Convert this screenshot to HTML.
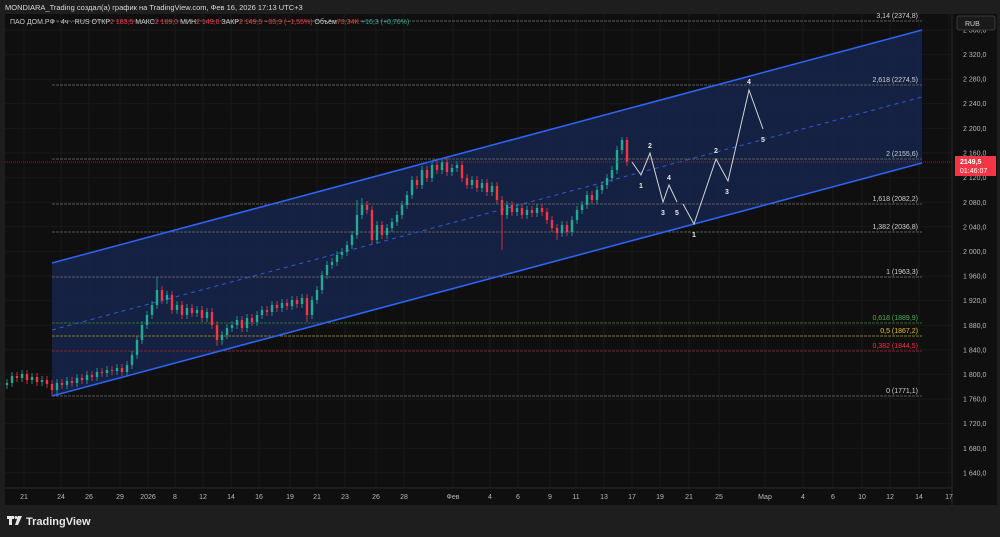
<!DOCTYPE html><html><head><meta charset="utf-8"><style>
html,body{margin:0;padding:0;background:#1e1e1e;width:1000px;height:537px;overflow:hidden;font-family:"Liberation Sans","Noto Sans CJK SC",sans-serif}
svg{position:absolute;left:0;top:0}
</style></head><body>
<svg width="1000" height="537" xmlns="http://www.w3.org/2000/svg" font-family="Liberation Sans, sans-serif">
<rect width="1000" height="537" fill="#1e1e1e"/>
<text x="5" y="10" fill="#d8d8d8" font-size="7.5">MONDIARA_Trading создал(а) график на TradingView.com, Фев 16, 2026 17:13 UTC+3</text>
<rect x="5" y="14" width="992" height="491" fill="#0f0f0f"/>
<g stroke="#181818" stroke-width="1">
<path d="M24 14V488M61 14V488M89 14V488M120 14V488M148 14V488M175 14V488M203 14V488M231 14V488M259 14V488M290 14V488M317 14V488M345 14V488M376 14V488M404 14V488M453 14V488M490 14V488M518 14V488M550 14V488M576 14V488M604 14V488M632 14V488M660 14V488M689 14V488M719 14V488M765 14V488M803 14V488M833 14V488M862 14V488M890 14V488M919 14V488M949 14V488"/>
<path d="M5 30H952M5 54.6H952M5 79.2H952M5 103.8H952M5 128.4H952M5 153H952M5 177.6H952M5 202.2H952M5 226.8H952M5 251.4H952M5 276H952M5 300.6H952M5 325.2H952M5 349.8H952M5 374.4H952M5 399H952M5 423.6H952M5 448.2H952M5 472.8H952"/>
</g>
<polygon points="52,263 922,30 922,163 52,396" fill="#162346" opacity="0.95"/>
<g stroke-width="1" stroke-dasharray="3,1">
<path d="M52 21H922M52 85H922M52 159H922M52 204H922M52 232H922M52 277H922M52 396H922" stroke="#5a5a5a"/>
<path d="M52 323H922" stroke="#2f6b33"/>
<path d="M52 336H922" stroke="#8a7720"/>
<path d="M52 351H922" stroke="#7a2530"/>
</g>
<g font-size="7" text-anchor="end" fill="#d0d0d0">
<text x="918" y="18">3,14 (2374,8)</text>
<text x="918" y="82">2,618 (2274,5)</text>
<text x="918" y="156">2 (2155,6)</text>
<text x="918" y="201">1,618 (2082,2)</text>
<text x="918" y="229">1,382 (2036,8)</text>
<text x="918" y="274">1 (1963,3)</text>
<text x="918" y="320" fill="#4caf50">0,618 (1889,9)</text>
<text x="918" y="333" fill="#e6c229">0,5 (1867,2)</text>
<text x="918" y="348" fill="#f23645">0,382 (1844,5)</text>
<text x="918" y="393">0 (1771,1)</text>
</g>
<line x1="52" y1="330" x2="922" y2="97" stroke="#2f5ad8" stroke-width="1" stroke-dasharray="4,4"/>
<g fill="none">
<path stroke="#22ab94" stroke-width="2.4" d="M7 385V383M12 383V376M22 378V374M32 380V377M42 382V380M57 390V383M67 385V381M77 383V378M87 380V375M97 377V372M107 373V370M117 371V368M127 372V365M132 365V355M137 355V340M142 340V325M147 325V315M152 315V305M157 305V290M167 300V295M177 310V305M187 315V308M197 313V310M207 318V312M222 340V335M227 335V328M232 328V325M237 325V320M247 328V318M257 322V315M262 315V310M272 312V305M282 308V303M292 306V300M302 304V298M312 315V300M317 300V290M322 290V275M327 275V265M332 265V262M337 262V255M342 255V252M347 252V245M352 245V235M357 235V215M362 215V205M377 240V225M387 235V228M392 228V222M397 222V215M402 215V205M407 205V195M412 195V180M422 185V170M432 178V165M442 170V162M452 172V168M457 168V165M472 185V180M482 188V183M492 192V186M507 215V205M517 212V208M527 215V210M537 213V208M562 233V225M572 232V220M577 220V210M582 210V205M587 205V195M597 200V190M602 190V185M607 185V178M612 178V170M617 170V150M622 150V140"/>
<path stroke="#22ab94" stroke-width="0.8" d="M7 379V389M12 372V387M22 370V382M32 373V384M42 376V386M57 379V394M67 377V389M77 374V387M87 371V384M97 368V381M107 366V377M117 364V375M127 361V376M132 351V369M137 336V359M142 321V344M147 311V329M152 301V319M157 277V309M167 291V304M177 301V314M187 304V319M197 306V317M207 308V322M222 331V345M227 324V339M232 321V332M237 316V329M247 314V332M257 311V326M262 306V319M272 301V316M282 299V312M292 296V310M302 294V308M312 296V319M317 286V304M322 271V294M327 261V279M332 258V269M337 251V266M342 248V259M347 241V256M352 231V249M357 200V239M362 198V219M377 221V244M387 224V239M392 218V232M397 211V226M402 201V219M407 191V209M412 176V199M422 166V189M432 161V182M442 158V174M452 164V176M457 161V172M472 176V189M482 179V192M492 182V196M507 201V219M517 204V216M527 206V219M537 204V217M562 221V237M572 216V236M577 206V224M582 201V214M587 191V209M597 186V204M602 181V194M607 174V189M612 166V182M617 146V174M622 137V154"/>
<path stroke="#f23645" stroke-width="2.4" d="M17 376V378M27 374V380M37 377V382M47 380V384M52 384V390M62 383V385M72 381V383M82 378V380M92 375V377M102 372V373M112 370V371M122 368V372M162 290V300M172 295V310M182 305V315M192 308V313M202 310V318M212 312V325M217 325V340M242 320V328M252 318V322M267 310V312M277 305V308M287 303V306M297 300V304M307 298V315M367 205V210M372 210V240M382 225V235M417 180V185M427 170V178M437 165V170M447 162V172M462 165V178M467 178V185M477 180V188M487 183V192M497 186V200M502 200V215M512 205V212M522 208V215M532 210V213M542 208V212M547 212V220M552 220V228M557 228V233M567 225V232M592 195V200M627 140V162"/>
<path stroke="#f23645" stroke-width="0.8" d="M17 372V382M27 370V384M37 373V386M47 376V388M52 380V396M62 379V389M72 377V387M82 374V384M92 371V381M102 368V377M112 366V375M122 364V376M162 286V304M172 291V314M182 301V319M192 304V317M202 306V322M212 308V329M217 321V346M242 316V332M252 314V326M267 306V316M277 301V312M287 299V310M297 296V308M307 294V322M367 201V214M372 206V244M382 221V239M417 176V189M427 166V182M437 161V174M447 158V176M462 161V182M467 174V189M477 176V192M487 179V196M497 182V204M502 196V250M512 201V216M522 204V219M532 206V217M542 204V216M547 208V224M552 216V232M557 224V240M567 221V236M592 191V204M627 137V166"/>
</g>
<line x1="52" y1="263" x2="922" y2="30" stroke="#2e62f0" stroke-width="1.6"/>
<line x1="52" y1="396" x2="922" y2="163" stroke="#2e62f0" stroke-width="1.6"/>
<line x1="5" y1="162" x2="952" y2="162" stroke="#7a2a35" stroke-width="1" stroke-dasharray="1,1"/>
<polyline points="632,162 641,175 650,153 663,202 669,185 677,202" fill="none" stroke="#cfd3da" stroke-width="1"/>
<polyline points="683,204 694,224 716,159 728,181 749,90 763,129" fill="none" stroke="#cfd3da" stroke-width="1"/>
<g fill="#e8e8e8" font-size="7" font-weight="bold" text-anchor="middle">
<text x="641" y="188">1</text><text x="650" y="148">2</text><text x="663" y="215">3</text><text x="669" y="180">4</text><text x="677" y="215">5</text>
<text x="694" y="237">1</text><text x="716" y="153">2</text><text x="727" y="194">3</text><text x="749" y="84">4</text><text x="763" y="142">5</text>
</g>
<text x="10" y="24" font-size="7" fill="#c8c8c8">ПАО ДОМ.РФ · 4ч · RUS  ОТКР<tspan fill="#f23645">2 183,5</tspan>  МАКС<tspan fill="#f23645">2 189,0</tspan>  МИН<tspan fill="#f23645">2 149,0</tspan>  ЗАКР<tspan fill="#f23645">2 149,5  −33,9 (−1,55%)</tspan>  Объём<tspan fill="#f23645">73,34K</tspan>  <tspan fill="#22ab94">+16,3 (+0,76%)</tspan></text>
<line x1="952" y1="14" x2="952" y2="505" stroke="#2a2a2a"/>
<line x1="5" y1="488" x2="952" y2="488" stroke="#2a2a2a"/>
<g fill="#b8b8b8" font-size="7">
<text x="963" y="32.5">2 360,0</text><text x="963" y="57">2 320,0</text><text x="963" y="81.5">2 280,0</text><text x="963" y="106">2 240,0</text><text x="963" y="131">2 200,0</text><text x="963" y="155.5">2 160,0</text><text x="963" y="180">2 120,0</text><text x="963" y="205">2 080,0</text><text x="963" y="229.5">2 040,0</text><text x="963" y="254">2 000,0</text><text x="963" y="278.5">1 960,0</text><text x="963" y="303">1 920,0</text><text x="963" y="328">1 880,0</text><text x="963" y="352.5">1 840,0</text><text x="963" y="377">1 800,0</text><text x="963" y="401.5">1 760,0</text><text x="963" y="426">1 720,0</text><text x="963" y="451">1 680,0</text><text x="963" y="475.5">1 640,0</text>
</g>
<g fill="#b8b8b8" font-size="7" text-anchor="middle">
<text x="24" y="499">21</text><text x="61" y="499">24</text><text x="89" y="499">26</text><text x="120" y="499">29</text><text x="148" y="499">2026</text><text x="175" y="499">8</text><text x="203" y="499">12</text><text x="231" y="499">14</text><text x="259" y="499">16</text><text x="290" y="499">19</text><text x="317" y="499">21</text><text x="345" y="499">23</text><text x="376" y="499">26</text><text x="404" y="499">28</text><text x="453" y="499">Фев</text><text x="490" y="499">4</text><text x="518" y="499">6</text><text x="550" y="499">9</text><text x="576" y="499">11</text><text x="604" y="499">13</text><text x="632" y="499">17</text><text x="660" y="499">19</text><text x="689" y="499">21</text><text x="719" y="499">25</text><text x="765" y="499">Мар</text><text x="803" y="499">4</text><text x="833" y="499">6</text><text x="862" y="499">10</text><text x="890" y="499">12</text><text x="919" y="499">14</text><text x="949" y="499">17</text>
</g>
<rect x="957" y="16" width="38" height="14" rx="2" fill="#1a1a1a" stroke="#3a3a3a"/>
<text x="965" y="26" fill="#d0d0d0" font-size="7">RUB</text>
<rect x="955" y="156" width="41" height="20" fill="#f23645"/>
<text x="960" y="164" fill="#fff" font-size="7" font-weight="bold">2149,5</text>
<text x="960" y="173" fill="#fff" font-size="7">01:46:07</text>
<g fill="#e6e6e6"><path d="M7 516h7v3h-2v6h-3v-6h-2z"/><circle cx="16" cy="517.5" r="1.5"/><path d="M18 516h4l-4 9h-3z"/></g>
<text x="26" y="525" fill="#e6e6e6" font-size="11" font-weight="bold">TradingView</text>
</svg>
</body></html>
